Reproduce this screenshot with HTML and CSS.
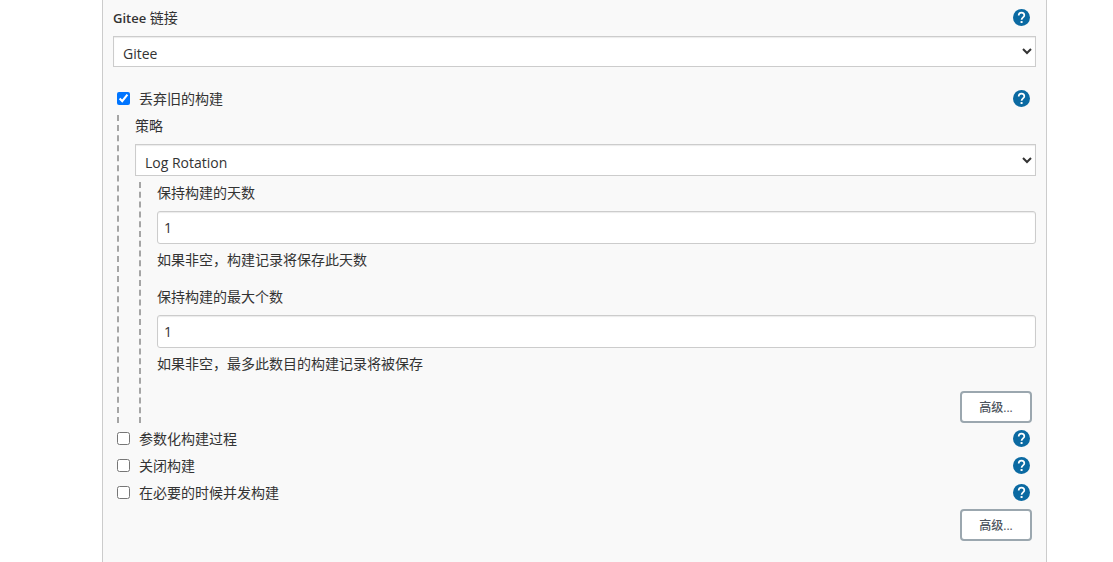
FILE: index.html
```
<!DOCTYPE html>
<html lang="zh-CN">
<head>
<meta charset="utf-8">
<title>Gitee</title>
<link rel="stylesheet" href="styles.css">
</head>
<body>
<svg class="defs" aria-hidden="true">
  <symbol id="help" viewBox="0 0 24 24">
    <circle cx="12" cy="12" r="12" fill="#0b6aa2"/>
    <path d="M8 9.200C8 6.600 9.600 5 12 5s4 1.600 4 3.800c0 2.800-3.900 3.200-3.900 6.200" fill="none" stroke="#fff" stroke-width="2.400"/>
    <rect x="10.700" y="17" width="2.800" height="2.800" fill="#fff"/>
  </symbol>
</svg>
<main class="panel">
  <form class="form">
    <div class="row row-title">
      <label for="conn"><span class="title">Gitee</span> 链接</label>
      <button type="button" class="help" aria-label="帮助"><svg><use href="#help"/></svg></button>
    </div>
    <select class="select" id="conn"><option>Gitee</option></select>

    <div class="row row-first">
      <label class="check"><input type="checkbox" checked>丢弃旧的构建</label>
      <button type="button" class="help" aria-label="帮助"><svg><use href="#help"/></svg></button>
    </div>
    <div class="nest">
      <label class="label" for="strategy">策略</label>
      <select class="select select-strategy" id="strategy"><option>Log Rotation</option></select>
      <div class="nest nest-inner">
        <div class="field">
          <label class="label" for="days">保持构建的天数</label>
          <input class="input" id="days" type="text" value="1">
          <p class="note">如果非空，构建记录将保存此天数</p>
        </div>
        <div class="field">
          <label class="label" for="count">保持构建的最大个数</label>
          <input class="input" id="count" type="text" value="1">
          <p class="note">如果非空，最多此数目的构建记录将被保存</p>
        </div>
        <div class="actions"><button type="button" class="button">高级...</button></div>
      </div>
    </div>

    <div class="options">
      <div class="row">
        <label class="check"><input type="checkbox">参数化构建过程</label>
        <button type="button" class="help" aria-label="帮助"><svg><use href="#help"/></svg></button>
      </div>
      <div class="row">
        <label class="check"><input type="checkbox">关闭构建</label>
        <button type="button" class="help" aria-label="帮助"><svg><use href="#help"/></svg></button>
      </div>
      <div class="row">
        <label class="check"><input type="checkbox">在必要的时候并发构建</label>
        <button type="button" class="help" aria-label="帮助"><svg><use href="#help"/></svg></button>
      </div>
    </div>
    <div class="actions"><button type="button" class="button">高级...</button></div>
  </form>
</main>
</body>
</html>
```
FILE: styles.css
```
* { box-sizing: border-box; }

body {
  margin: 0;
  background: #fff;
  color: #333;
  font: 14px/22px "Open Sans", "Noto Sans CJK SC", sans-serif;
}

.defs { position: absolute; width: 0; height: 0; }

.panel {
  min-height: 100vh;
  margin: 0 66px 0 102px;
  padding: 4px 10px 20px;
  background: #f9f9f9;
  border: solid #ccc;
  border-width: 0 1px;
}

.row {
  display: flex;
  align-items: center;
  justify-content: space-between;
  height: 27px;
  padding-right: 6px;
}

.row-title { margin-bottom: 5px; }
.row-first { margin-top: 18px; margin-bottom: 3px; }
.title { font-weight: 600; font-size: 13px; }
.options { padding: 2px 0 3px; }

.check { display: flex; align-items: center; }
.check input {
  width: 13px;
  height: 13px;
  margin: 0 9px 0 4px;
}

.help {
  width: 17px;
  height: 17px;
  padding: 0;
  border: 0;
  background: none;
}
.help svg { display: block; width: 17px; height: 17px; }

.select,
.input {
  display: block;
  width: 100%;
  color: #333;
  background: #fff;
  border: 1px solid #ccc;
  box-shadow: inset 0 1px 1px rgba(0, 0, 0, 0.08);
  font: inherit;
}
.select { height: 31px; padding: 4px 6px 0 5px; border-radius: 0; }
.select-strategy { height: 32px; }
.input { height: 33px; padding: 0 6px; border-radius: 3px; }

.nest {
  margin-left: 4px;
  padding-left: 16px;
  border-left: 2px dashed #a5a5a5;
}
.nest-inner { margin-top: 6px; }

.label { display: block; padding-bottom: 7px; }
.field { margin-bottom: 15px; }
.field:nth-child(2) { margin-bottom: 16px; }
.note { margin: 5px 0 0; }

.actions { display: flex; justify-content: flex-end; padding-right: 4px; }
.button {
  width: 72px;
  height: 32px;
  padding: 2px 0 0;
  color: #4d545d;
  background: #fff;
  border: 2px solid #9ba7af;
  border-radius: 4px;
  font: 500 12px/18px "Open Sans", "Noto Sans CJK SC", sans-serif;
}
```
